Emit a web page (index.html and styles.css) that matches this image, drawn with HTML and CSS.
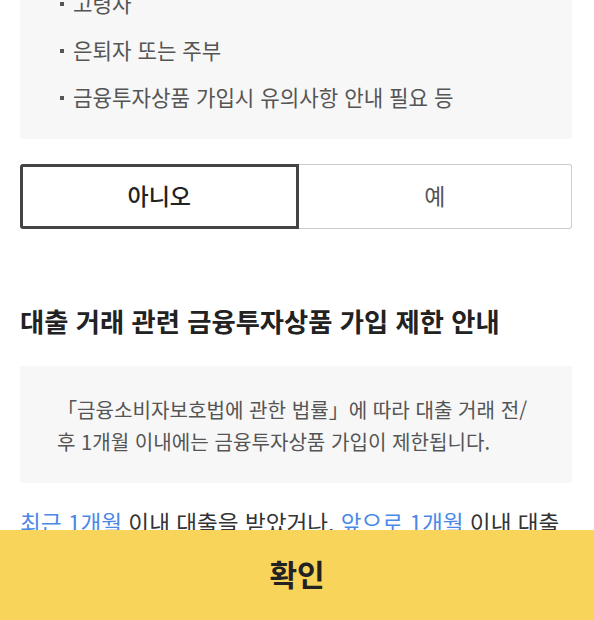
FILE: index.html
```html
<!DOCTYPE html>
<html lang="ko">
<head>
  <meta charset="UTF-8">
  <meta name="viewport" content="width=device-width, initial-scale=1.0">
  <title>금융투자상품 가입 제한 안내</title>
  <link rel="stylesheet" href="styles.css">
</head>
<body>

  <div class="page">
    <ul class="info-box bullet-list">
      <li>고령자</li>
      <li>은퇴자 또는 주부</li>
      <li>금융투자상품 가입시 유의사항 안내 필요 등</li>
    </ul>

    <div class="choice">
      <button class="choice-btn selected">아니오</button>
      <button class="choice-btn">예</button>
    </div>

    <h2 class="section-title">대출 거래 관련 금융투자상품 가입 제한 안내</h2>

    <div class="info-box notice">
      「금융소비자보호법에 관한 법률」에 따라 대출 거래 전/<br>
      후 1개월 이내에는 금융투자상품 가입이 제한됩니다.
    </div>

    <p class="desc">
      <a href="#" class="link">최근 1개월</a> 이내 대출을 받았거나, <a href="#" class="link">앞으로 1개월</a> 이내 대출을 받을 예정이라면 금융투자상품에 가입할 수 없습니다.
    </p>
  </div>

  <div class="bottom-bar">
    <button class="confirm-btn">확인</button>
  </div>

</body>
</html>
```

FILE: styles.css
```css
body {
  font-family: "Noto Sans CJK KR", "Noto Sans", sans-serif;
  margin: 0;
  padding: 0;
  background-color: #fff;
  color: #222;
  overflow: hidden;
  height: 620px;
}
.page {
  padding: 0 22px 0 20px;
  margin-top: -39px;
}
.info-box {
  background-color: #f7f7f7;
  margin: 0;
}
.bullet-list {
  list-style: none;
  padding: 27px 36px 27px 40px;
}
.bullet-list li {
  position: relative;
  padding-left: 13px;
  font-size: 21.2px;
  line-height: 30px;
  color: #555;
}
.bullet-list li + li {
  margin-top: 17px;
}
.bullet-list li::before {
  content: "";
  position: absolute;
  left: 0;
  top: 14px;
  width: 4px;
  height: 4px;
  background-color: #555;
}
.choice {
  display: flex;
  margin-top: 25px;
  height: 65px;
}
.choice-btn {
  flex: 1;
  padding: 0 0 3px;
  font-family: inherit;
  font-size: 23px;
  line-height: 1;
  color: #555;
  background-color: #fff;
  border: 1px solid #ccc;
  border-left: none;
  border-radius: 0 3px 3px 0;
  cursor: pointer;
}
.choice-btn.selected {
  border: 3px solid #444;
  border-radius: 3px 0 0 3px;
  color: #222;
  font-weight: 500;
}
.section-title {
  font-size: 26.3px;
  font-weight: 700;
  line-height: 34px;
  margin: 75px 0 28px;
  color: #222;
}
.notice {
  padding: 28px 30px 25px 37px;
  font-size: 20.1px;
  line-height: 32px;
  color: #555;
}
.desc {
  margin: 24px 0 0;
  font-size: 22.6px;
  line-height: 32px;
  color: #333;
}
.link {
  color: #4a88e8;
  text-decoration: none;
}
.bottom-bar {
  position: fixed;
  left: 0;
  right: 0;
  bottom: 0;
  height: 90px;
  background-color: #f8d45a;
}
.confirm-btn {
  width: 100%;
  height: 100%;
  padding: 0 0 4px;
  background: none;
  border: none;
  font-family: inherit;
  font-size: 30px;
  font-weight: 700;
  color: #222;
  cursor: pointer;
}
```
